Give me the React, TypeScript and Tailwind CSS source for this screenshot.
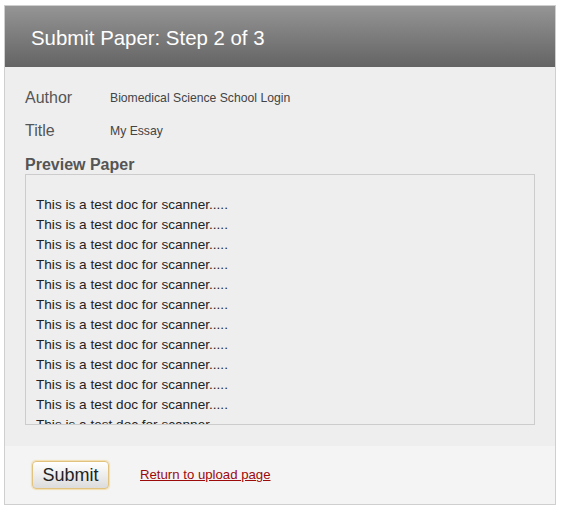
export default function App() {
  const lines = Array.from({ length: 13 }, () => "This is a test doc for scanner.....");
  return (
    <div className="min-h-[512px] bg-white pt-[5px] pl-[4px]" style={{ fontFamily: '"Liberation Sans", Arial, sans-serif' }}>
      <div className="w-[552px] border border-[#cfcfcf]">
        <div className="h-[61px] bg-gradient-to-b from-[#959595] to-[#646464] flex items-center pl-[26px]">
          <h1 className="text-[20.4px] text-white pt-[3px]">Submit Paper: Step 2 of 3</h1>
        </div>
        <div className="bg-[#eeeeee] px-[20px] pt-[19px] pb-[21px]">
          <div className="flex items-center h-[24px]">
            <span className="w-[85px] text-[16px] text-[#555]">Author</span>
            <span className="text-[12.2px] text-[#444]">Biomedical Science School Login</span>
          </div>
          <div className="flex items-center h-[24px] mt-[9px]">
            <span className="w-[85px] text-[16px] text-[#555]">Title</span>
            <span className="text-[12.2px] text-[#444]">My Essay</span>
          </div>
          <div className="h-[24px] mt-[10px] flex items-center text-[16px] font-bold text-[#555]">Preview Paper</div>
          <div className="mt-[-3px] w-[510px] h-[251px] border border-[#cccccc] overflow-hidden pt-[20px] px-[10px]">
            {lines.map((l, i) => (
              <div key={i} className="h-[20px] leading-[20px] text-[13.6px] text-[#222]">{l}</div>
            ))}
          </div>
        </div>
        <div className="bg-[#f4f4f4] h-[58px] flex items-start pt-[15px] pl-[27px]">
          <button className="w-[77px] h-[28px] rounded-[4px] border border-[#e2c27f] bg-gradient-to-b from-[#ffffff] to-[#dcdcdc] text-[18px] text-[#222] shadow-[0_0_1px_1px_#f3dfae]">
            Submit
          </button>
          <a href="#" className="ml-[31px] mt-[4px] text-[13.2px] text-[#9c0a0a] underline">Return to upload page</a>
        </div>
      </div>
    </div>
  );
}
